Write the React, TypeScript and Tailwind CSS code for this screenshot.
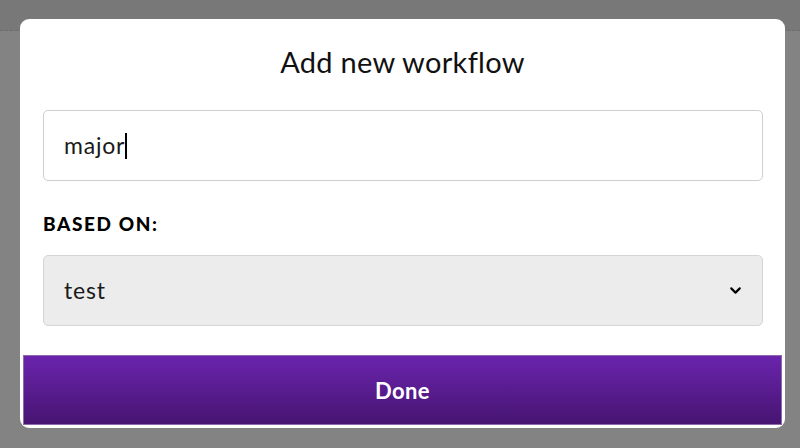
import React from 'react';
import { ChevronDown } from 'lucide-react';

export default function App() {
  return (
    <div className="w-[800px] h-[448px] bg-[#838383] relative overflow-hidden font-['Lato',sans-serif]">
      <div className="h-[31px] bg-[#787878] border-b border-dashed border-[#6e6e6e]" />
      <div className="absolute left-[20px] top-[19px] w-[765px] h-[409px] bg-white rounded-[9px] flex flex-col">
        <h1 className="pt-[25px] text-center text-[29px] leading-[35px] text-[#111] font-normal tracking-[0.3px]">
          Add new workflow
        </h1>
        <div className="px-[23px] pr-[22px] flex flex-col">
          <div className="mt-[31px] h-[71px] border-[1.5px] border-[#cfcfcf] rounded-[5px] flex items-center pl-[20px] text-[23px] tracking-[0.8px] text-[#1a1a1a]">
            <span>major</span>
            <span className="inline-block w-[1.5px] h-[26px] bg-black" />
          </div>
          <div className="mt-[33px] text-[19px] leading-[20px] font-black text-black tracking-[1.6px]">
            BASED ON:
          </div>
          <div className="mt-[21px] h-[71px] bg-[#ececec] border-[1.5px] border-[#d5d5d5] rounded-[5px] flex items-center justify-between pl-[20px] pr-[18px] text-[23px] tracking-[0.8px] text-[#1a1a1a]">
            <span>test</span>
            <ChevronDown className="w-[17px] h-[17px] text-black" strokeWidth={3} />
          </div>
        </div>
        <button className="mt-[29px] mx-[3px] h-[70px] bg-gradient-to-b from-[#6a24ad] to-[#471572] border border-[#8e6aab] text-white text-[22px] font-bold tracking-[0.4px]">
          Done
        </button>
      </div>
    </div>
  );
}
